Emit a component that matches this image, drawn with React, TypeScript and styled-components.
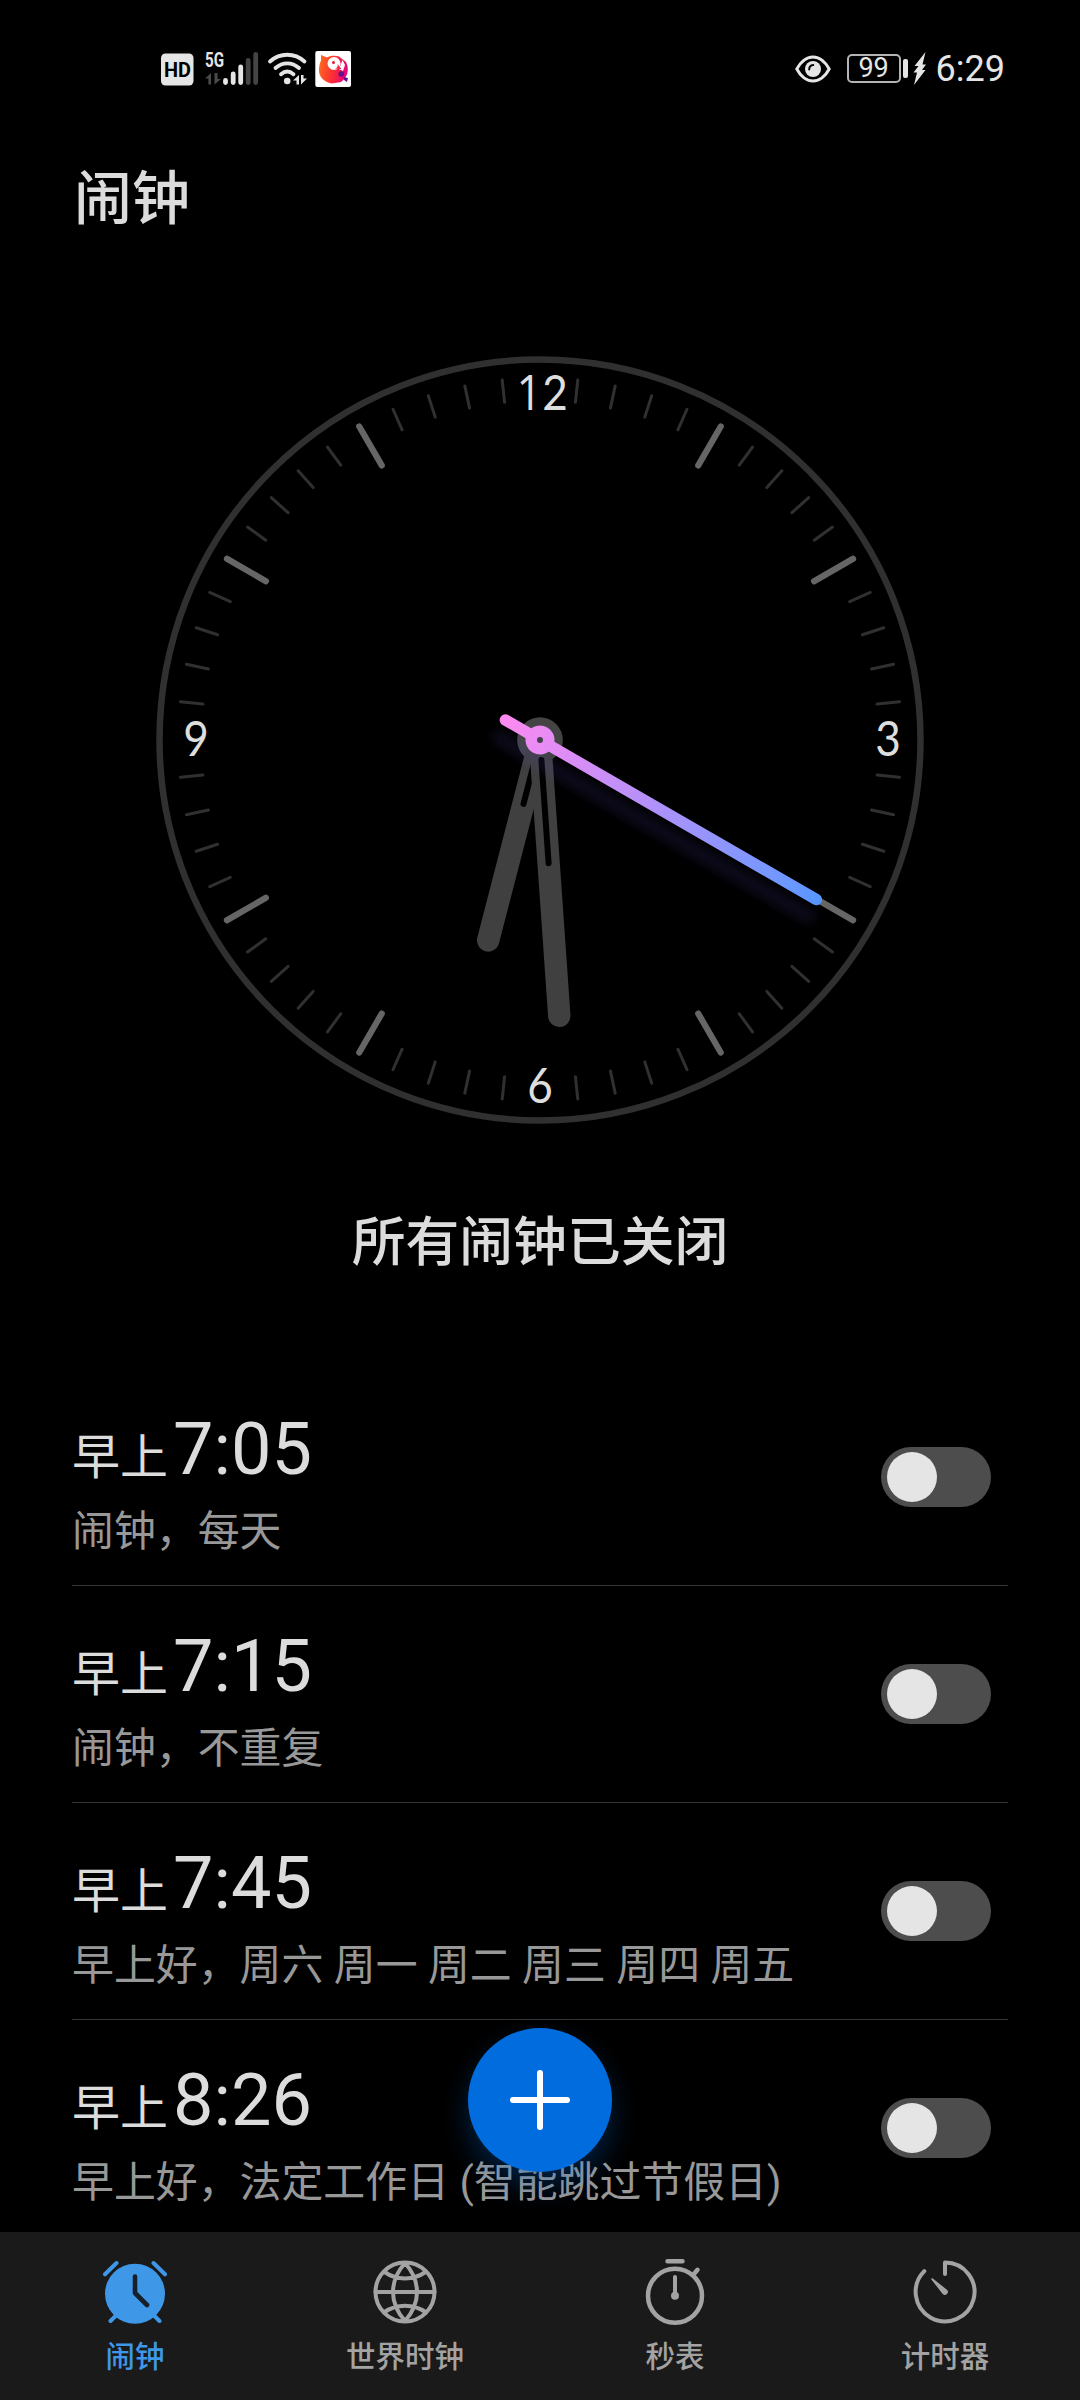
import React from "react";
import styled, { createGlobalStyle, css } from "styled-components";

const GlobalStyle = createGlobalStyle`
  * { box-sizing: border-box; }
  html, body { margin: 0; background: #000; }
  button { border: 0; padding: 0; background: none; font: inherit; color: inherit; }
`;

const Screen = styled.div`
  position: relative;
  display: flex;
  flex-direction: column;
  width: 1080px;
  height: 2400px;
  overflow: hidden;
  background: #000;
  color: #dcdcdc;
  font-family: Roboto, "Noto Sans CJK SC", sans-serif;
`;

const StatusBar = styled.header`
  display: flex;
  flex: none;
  justify-content: space-between;
  align-items: center;
  height: 137px;
  padding: 0 75px 0 160px;
  color: #e5e5e5;
`;

const StatusGroup = styled.div`
  display: flex;
  align-items: center;
`;

const Battery = styled.div`
  display: flex;
  align-items: center;
  justify-content: center;
  width: 54px;
  height: 29px;
  margin-left: 16px;
  border: 2px solid #b4b4b4;
  border-radius: 5px;
  font-size: 27px;
  line-height: 25px;
`;

const BatteryNub = styled.div`
  width: 5px;
  height: 19px;
  margin-left: 2px;
  border-radius: 2px;
  background: #e5e5e5;
`;

const Bolt = styled.svg`
  width: 14px;
  height: 33px;
  margin-left: 5px;
  fill: #e5e5e5;
`;

const StatusTime = styled.time`
  margin-left: 9px;
  padding-top: 1px;
  font-size: 36px;
  line-height: 42px;
`;

const Title = styled.h1`
  flex: none;
  height: 119px;
  margin: 0;
  padding-left: 74px;
  font-size: 58px;
  font-weight: 500;
  line-height: 125px;
`;

const Content = styled.main`
  display: flex;
  flex: 1;
  flex-direction: column;
  min-height: 0;
  overflow: hidden;
`;

const DialArea = styled.section`
  display: flex;
  flex: none;
  justify-content: center;
  padding-top: 100px;
`;

const Summary = styled.p`
  flex: none;
  height: 245px;
  margin: 0;
  text-align: center;
  font-size: 53.8px;
  font-weight: 500;
  line-height: 238px;
`;

const AlarmList = styled.ul`
  flex: none;
  margin: 0;
  padding: 0 72px;
  list-style: none;
`;

const AlarmRow = styled.li`
  display: flex;
  align-items: center;
  justify-content: space-between;
  height: 217px;
  padding-right: 17px;
  border-bottom: 1px solid #363636;
`;

const AlarmText = styled.div`
  display: flex;
  flex-direction: column;
  gap: 7px;
  padding-top: 11px;
`;

const AlarmTime = styled.div`
  display: flex;
  align-items: baseline;
  gap: 5px;
  font-size: 72px;
  line-height: 84px;
`;

const Period = styled.span`
  font-size: 48px;
`;

const AlarmNote = styled.div`
  color: #989898;
  font-size: 41.9px;
  line-height: 50px;
  white-space: pre;
`;

const Switch = styled.button`
  display: flex;
  align-items: center;
  width: 110px;
  height: 60px;
  padding: 0 6px;
  border-radius: 30px;
  background: #4d4d4d;
`;

const Knob = styled.span`
  width: 50px;
  height: 50px;
  border-radius: 50%;
  background: #e5e5e5;
`;

const AddButton = styled.button`
  position: absolute;
  left: 468px;
  bottom: 228px;
  display: flex;
  align-items: center;
  justify-content: center;
  width: 144px;
  height: 144px;
  border-radius: 50%;
  background: #006cde;
  box-shadow: 0 14px 28px rgba(0, 108, 222, 0.3);
`;

const Nav = styled.nav`
  display: grid;
  flex: none;
  grid-template-columns: repeat(4, 1fr);
  height: 168px;
  background: #1a1a1a;
`;

const NavItem = styled.button<{ $active?: boolean }>`
  display: flex;
  flex-direction: column;
  align-items: center;
  padding-top: 24px;
  color: #a3a3a3;
  font-size: 29.5px;
  font-weight: 500;
  line-height: 40px;
  ${(p) =>
    p.$active &&
    css`
      color: #3f97e8;
    `}
`;

const NavIcon = styled.svg`
  width: 72px;
  height: 72px;
  margin-bottom: 9px;
  fill: none;
  stroke: currentColor;
  stroke-width: 4;
  stroke-linecap: round;
  stroke-linejoin: round;
`;

const DialDigit = styled.text`
  fill: #dedede;
  font-family: Lato, "Open Sans", sans-serif;
  font-size: 49px;
  text-anchor: middle;
`;

const DialOne = styled(DialDigit)`
  font-family: "Open Sans", sans-serif;
`;

function Dial() {
  const ticks = Array.from({ length: 60 }, (_, i) => i).filter((i) => i % 15 !== 0);
  return (
    <svg width="768" height="768" viewBox="-384 -384 768 768" overflow="visible">
      <defs>
        <linearGradient id="sweep" gradientUnits="userSpaceOnUse" x1="0" y1="45" x2="0" y2="-325">
          <stop offset="0" stopColor="#ff8af0" />
          <stop offset="0.13" stopColor="#e88cf4" />
          <stop offset="0.9" stopColor="#6c98ff" />
          <stop offset="1" stopColor="#5595ff" />
        </linearGradient>
        <filter id="soft" filterUnits="userSpaceOnUse" x="-80" y="-380" width="160" height="480">
          <feGaussianBlur stdDeviation="6" />
        </filter>
      </defs>
      <circle r="380.500" fill="none" stroke="#303030" strokeWidth="6.500" />
      {ticks.map((i) => (
        <line
          key={i}
          y1={-361.5}
          y2={i % 5 ? -339 : -316.5}
          transform={`translate(0 -0.500) rotate(${i * 6})`}
          stroke={i % 5 ? "#303030" : "#666"}
          strokeWidth={i % 5 ? 3 : 6.2}
          strokeLinecap="round"
        />
      ))}
      <DialOne transform="translate(-11 -330) scale(0.9 1)">1</DialOne>
      <DialDigit transform="translate(15 -330) scale(0.9 1)">2</DialDigit>
      <DialDigit transform="translate(348 16) scale(0.9 1)">3</DialDigit>
      <DialDigit transform="translate(0 363) scale(0.9 1)">6</DialDigit>
      <DialDigit transform="translate(-344 16) scale(0.9 1)">9</DialDigit>
      <circle r="22.800" fill="#444" />
      <g transform="rotate(194.500)" strokeLinecap="round">
        <line y1="-11" y2="-207" stroke="#404040" strokeWidth="22.400" />
        <line y1="-20" y2="-66" stroke="#000" strokeWidth="6" />
      </g>
      <g transform="rotate(176)" strokeLinecap="round">
        <line y1="-11" y2="-276.500" stroke="#404040" strokeWidth="22.400" />
        <line y1="-20" y2="-123.500" stroke="#000" strokeWidth="6" />
      </g>
      <g transform="translate(-7 17) rotate(120)" filter="url(#soft)">
        <line y1="40" y2="-319" stroke="#5a46c8" strokeOpacity="0.17" strokeWidth="12" strokeLinecap="round" />
      </g>
      <g transform="rotate(120)">
        <path d="M0 -324.800a5.700 5.700 0 0 1 5.700 5.700V40a5.700 5.700 0 0 1-11.400 0V-319.100a5.700 5.700 0 0 1 5.700-5.700z" fill="url(#sweep)" />
        <circle r="14.500" fill="url(#sweep)" />
      </g>
      <circle r="3" fill="#45404c" />
    </svg>
  );
}

const alarms = [
  { time: "7:05", note: "闹钟\uff0c每天" },
  { time: "7:15", note: "闹钟\uff0c不重复" },
  { time: "7:45", note: "早上好\uff0c周六 周一 周二 周三 周四 周五" },
  { time: "8:26", note: "早上好\uff0c法定工作日 (智能跳过节假日)" },
];

function SignalIcons() {
  return (
    <svg width="192" height="58" viewBox="160 39 192 58">
      <defs>
        <linearGradient id="bird" x1="0" y1="0.3" x2="1" y2="0.5">
          <stop offset="0" stopColor="#ff6a1f" />
          <stop offset="0.55" stopColor="#fb2c36" />
          <stop offset="1" stopColor="#e3007f" />
        </linearGradient>
      </defs>
      <rect x="161" y="52.500" width="32.500" height="32" rx="4.500" fill="#e5e5e5" />
      <text x="177.500" y="76" textAnchor="middle" fontFamily="Roboto" fontWeight="700" fontSize="21" textLength="27" lengthAdjust="spacingAndGlyphs" fill="#000">HD</text>
      <text x="205" y="65.700" fontFamily="Roboto" fontWeight="700" fontSize="20.500" textLength="19" lengthAdjust="spacingAndGlyphs" fill="#e5e5e5">5G</text>
      <path d="M205 77.500l6-5.500v11.500h-2.600v-6zM214.500 72v11.500l6.500-5.500h-3.500v-6z" fill="#4a4a4a" />
      <g strokeWidth="4.800" strokeLinecap="round" stroke="#e5e5e5">
        <path d="M225.500 79.500v2M233.200 73v8.500M240.700 66v15.500" />
        <path d="M248.200 59.500v22M255.700 53.500v28" stroke="#444" />
      </g>
      <g fill="none" stroke="#e5e5e5" strokeWidth="3.800" strokeLinecap="round">
        <path d="M270 60.500c10-9 24.500-9 34.500 0M275.500 67c7-6.300 16.500-6.300 23.500 0M281 73.200c4-3.400 8.500-3.400 12.500 0" />
      </g>
      <circle cx="287.200" cy="80" r="3.300" fill="#e5e5e5" />
      <path d="M293 79.500l6-5.500v9.500h-2.500v-4zM301 74v9.500l6-6h-3.500v-3.500z" fill="#e5e5e5" />
      <rect x="315.300" y="50" width="35.700" height="36" rx="2" fill="#fff" />
      <path d="M321 54l6 2.500c3-2 8-2.500 12-1l7 5.500c4 8 1 16-5 20l-9 1.500c-7-1-13-6-13-13 0-5 1-8 2-10z" fill="url(#bird)" />
      <circle cx="334" cy="62.500" r="6.500" fill="#fff" />
      <circle cx="333.500" cy="61.500" r="1.500" fill="#e01b3c" />
      <path d="M339 68l3.500-9 2.500 5-2 6z" fill="#fff" />
      <path d="M335 67.500q3.500-1 2.500-4.500l4 5z" fill="#ee2145" />
      <circle cx="341.300" cy="73" r="2.800" fill="#65108f" />
      <path d="M343.500 76l4.500 1-1 4-3-2z" fill="#65108f" />
    </svg>
  );
}

export default function App() {
  return (
    <Screen>
      <GlobalStyle />
      <StatusBar>
        <SignalIcons />
        <StatusGroup>
          <svg width="36" height="28" viewBox="0 0 36 28">
            <path d="M1.800 14C5 8 11 2 18 2s13 6 16.200 12C31 20 25 26 18 26S5 20 1.800 14z" fill="none" stroke="#e5e5e5" strokeWidth="3" />
            <circle cx="18" cy="14" r="8" fill="#e5e5e5" />
            <path d="M14.200 14.500q0-4 4-4.500" fill="none" stroke="#000" strokeWidth="2" strokeLinecap="round" />
          </svg>
          <Battery>99</Battery>
          <BatteryNub />
          <Bolt viewBox="0 0 14 33">
            <path d="M12.500 0L1.500 14h4L0.500 20.500h3.500L1 33 12.500 18H9l4-5.500H9.500z" />
          </Bolt>
          <StatusTime>6:29</StatusTime>
        </StatusGroup>
      </StatusBar>
      <Title>闹钟</Title>
      <Content>
        <DialArea>
          <Dial />
        </DialArea>
        <Summary>所有闹钟已关闭</Summary>
        <AlarmList>
          {alarms.map((a) => (
            <AlarmRow key={a.time}>
              <AlarmText>
                <AlarmTime>
                  <Period>早上</Period>
                  {a.time}
                </AlarmTime>
                <AlarmNote>{a.note}</AlarmNote>
              </AlarmText>
              <Switch role="switch" aria-checked={false}>
                <Knob />
              </Switch>
            </AlarmRow>
          ))}
        </AlarmList>
      </Content>
      <Nav>
        <NavItem $active>
          <NavIcon viewBox="0 0 72 72">
            <circle cx="36" cy="37.700" r="30" fill="currentColor" stroke="none" />
            <path d="M6 18.300L17.500 7M66 18.300L54.500 7M11.500 65l7-7M60.500 65l-7-7" />
            <path d="M36 20.500V37l12 12" stroke="#15202a" strokeWidth="4.600" />
          </NavIcon>
          闹钟
        </NavItem>
        <NavItem>
          <NavIcon viewBox="0 0 72 72">
            <circle cx="36" cy="36" r="29.500" />
            <path d="M6.500 36h59M36 7C20 25 20 47 36 65M36 7c16 18 16 40 0 58M15.500 16c12 8.500 29 8.500 41 0M15.500 56c12-8.500 29-8.500 41 0" />
          </NavIcon>
          世界时钟
        </NavItem>
        <NavItem>
          <NavIcon viewBox="0 0 72 72">
            <circle cx="36" cy="39.700" r="27" strokeWidth="4.500" />
            <path d="M28.500 5.200h15M54.500 18.500l4-4.700" strokeWidth="4.500" />
            <path d="M36 21v18" />
            <circle cx="36" cy="39.700" r="4" fill="currentColor" stroke="none" />
          </NavIcon>
          秒表
        </NavItem>
        <NavItem>
          <NavIcon viewBox="0 0 72 72">
            <path d="M36 18V6.600A29.400 29.400 0 1 1 15.300 15.200" />
            <path d="M23 23L34.300 37.400a2.100 2.100 0 0 0 3.100-3.100z" fill="currentColor" strokeWidth="1.600" />
          </NavIcon>
          计时器
        </NavItem>
      </Nav>
      <AddButton aria-label="添加">
        <svg width="60" height="60" viewBox="0 0 60 60" stroke="#fff" strokeWidth="6" strokeLinecap="round">
          <path d="M3 30h54M30 3v54" />
        </svg>
      </AddButton>
    </Screen>
  );
}
